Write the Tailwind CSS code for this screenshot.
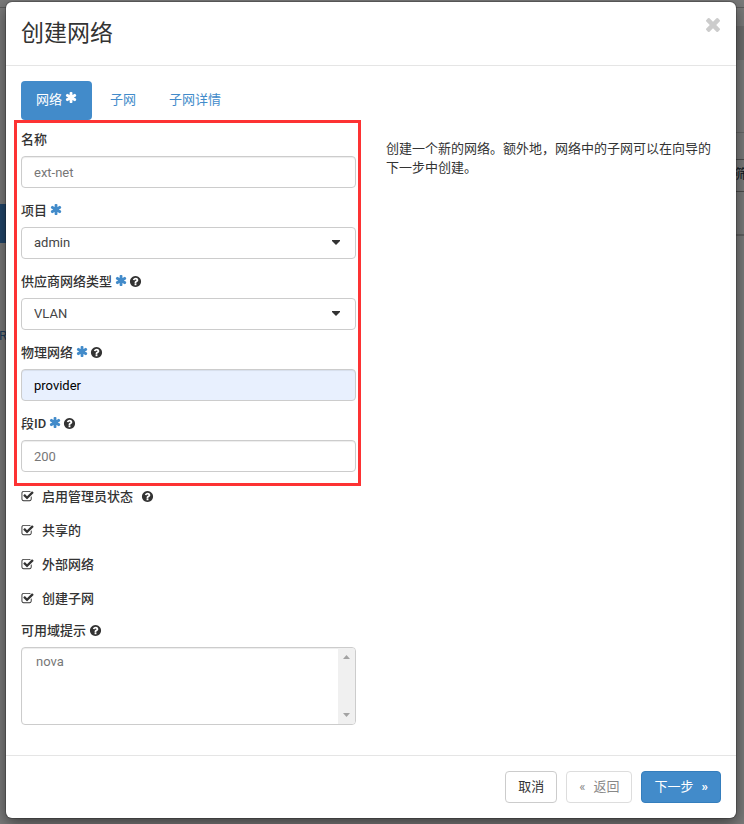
<!DOCTYPE html>
<html lang="zh-CN">
<head>
<meta charset="utf-8">
<meta name="viewport" content="width=device-width, initial-scale=1">
<title>创建网络</title>
<script src="https://cdn.jsdelivr.net/npm/@tailwindcss/browser@4"></script>
</head>
<body class="relative min-h-screen overflow-x-hidden bg-[#7a7a7a] font-[Roboto,'Noto_Sans_CJK_SC',sans-serif] text-[13px] leading-[19px] text-[#333]">

<svg class="hidden" aria-hidden="true">
  <symbol id="asterisk" viewBox="0 0 1792 1792"><path d="M1482 1050q46 26 59.5 77.5t-12.500 97.500l-64 110q-26 46-77.500 59.500t-97.500-12.500l-266-153v307q0 52-38 90t-90 38h-128q-52 0-90-38t-38-90v-307l-266 153q-46 26-97.500 12.500t-77.500-59.500l-64-110q-26-46-12.500-97.500t59.500-77.500l266-154-266-154q-46-26-59.500-77.500t12.500-97.500l64-110q26-46 77.500-59.500t97.500 12.500l266 153v-307q0-52 38-90t90-38h128q52 0 90 38t38 90v307l266-153q46-26 97.500-12.500t77.500 59.500l64 110q26 46 12.500 97.500t-59.500 77.500l-266 154z"/></symbol>
  <symbol id="help" viewBox="0 0 1792 1792"><path d="M1024 1376v-192q0-14-9-23t-23-9h-192q-14 0-23 9t-9 23v192q0 14 9 23t23 9h192q14 0 23-9t9-23zm256-672q0-88-55.500-163t-138.500-116-170-41q-243 0-371 213-15 24 8 42l132 100q7 6 19 6 16 0 25-12 53-68 86-92 34-24 86-24 48 0 85.500 26t37.500 59q0 38-20 61t-68 45q-63 28-115.500 86.500t-52.500 125.500v36q0 14 9 23t23 9h192q14 0 23-9t9-23q0-19 21.500-49.500t54.500-49.500q32-18 49-28.500t46-35 44.500-48 28-60.500 12.500-81zm384 192q0 209-103 385.500t-279.500 279.500-385.500 103-385.500-103-279.500-279.500-103-385.500 103-385.500 279.500-279.500 385.500-103 385.500 103 279.500 279.500 103 385.500z"/></symbol>
  <symbol id="check" viewBox="0 0 1792 1792"><path d="M1472 930v318q0 119-84.500 203.500t-203.500 84.500h-832q-119 0-203.500-84.500t-84.500-203.500v-832q0-119 84.500-203.500t203.500-84.500h832q63 0 117 25 15 7 18 23 3 17-9 29l-49 49q-10 10-23 10-3 0-9-2-23-6-45-6h-832q-66 0-113 47t-47 113v832q0 66 47 113t113 47h832q66 0 113-47t47-113v-254q0-13 9-22l64-64q10-10 23-10 6 0 12 3 20 8 20 29zm231-489l-814 814q-24 24-57 24t-57-24l-430-430q-24-24-24-57t24-57l110-110q24-24 57-24t57 24l263 263 647-647q24-24 57-24t57 24l110 110q24 24 24 57t-24 57z"/></symbol>
</svg>

<!-- Dimmed page behind the dialog -->
<div class="absolute inset-0 overflow-hidden" aria-hidden="true">
  <div class="absolute inset-x-0 top-[7px] h-px bg-[#5c5c5c]"></div>
  <div class="absolute right-0 top-[26px] h-[34px] w-3 bg-[#6d6d6d]"></div>
  <div class="absolute right-0 top-[132px] h-px w-3 bg-[#666]"></div>
  <div class="absolute right-0 top-[159px] h-[33px] w-3 border-y border-[#4c4c4c]"></div>
  <div class="absolute right-0 top-[234px] h-0.5 w-3 bg-[#606060]"></div>
  <span class="absolute left-[735px] top-[164px] text-[#0b1420]">筛</span>
  <div class="absolute left-0 top-[204px] h-[39px] w-3 bg-[#21466a]"></div>
  <span class="absolute -left-px top-[326px] text-[#1d3d5c]">R</span>
</div>

<div role="dialog" aria-modal="true" aria-labelledby="dialog-title" class="relative ml-1.5 mr-2 mt-0.5 rounded-md bg-white shadow-[0_0_0_1px_rgba(0,0,0,0.2),0_5px_15px_rgba(0,0,0,0.5)]">
  <header class="flex items-start justify-between border-b border-[#e5e5e5] px-[15px] py-4">
    <h1 id="dialog-title" class="text-[23px] leading-[31px]">创建网络</h1>
    <button type="button" aria-label="关闭" class="mr-px text-[#ccc]">
      <svg class="size-3.5 fill-current" viewBox="302 366 1188 1188"><path d="M1490 1322q0 40-28 68l-136 136q-28 28-68 28t-68-28l-294-294-294 294q-28 28-68 28t-68-28l-136-136q-28-28-28-68t28-68l294-294-294-294q-28-28-28-68t28-68l136-136q28-28 68-28t68 28l294 294 294-294q28-28 68-28t68 28l136 136q28 28 28 68t-28 68l-294 294 294 294q28 28 28 68z"/></svg>
    </button>
  </header>

  <form>
    <div class="px-[15px] pb-[30px] pt-[15px]">
      <nav class="mb-[11px] flex gap-[3px] text-[#428bca]">
        <a href="#network" aria-current="step" class="flex h-[39px] items-center gap-[3px] rounded bg-[#428bca] pb-[3px] pl-[15px] pr-3.5 text-white">网络<svg class="mb-[3px] size-[13px] fill-current"><use href="#asterisk"/></svg></a>
        <a href="#subnet" class="flex h-[39px] items-center px-[15px] pb-[3px]">子网</a>
        <a href="#details" class="flex h-[39px] items-center px-[15px] pb-[3px]">子网详情</a>
      </nav>

      <div class="grid grid-cols-2 gap-[30px]">
        <div>
          <div class="relative flex flex-col gap-3.5">
            <div class="flex flex-col gap-[7px]">
              <label for="name" class="flex h-[18px] items-center pb-px font-medium">名称</label>
              <input id="name" type="text" value="ext-net" class="h-8 w-full rounded border border-[#ccc] px-3 text-[#777] shadow-[inset_0_1px_1px_rgba(0,0,0,0.075)]">
            </div>
            <div class="flex flex-col gap-[7px]">
              <label for="project" class="flex h-[18px] items-center gap-[3px] pb-px font-medium">项目<svg class="mb-[3px] size-[13px] fill-[#428bca]"><use href="#asterisk"/></svg></label>
              <div class="relative">
                <select id="project" class="block h-8 w-full appearance-none rounded border border-[#ccc] bg-white px-3 pb-0.5 text-[#444]"><option>admin</option></select>
                <svg class="pointer-events-none absolute right-4 top-[13px] h-[5px] w-2 fill-[#333]" viewBox="0 0 8 5"><path d="M0 0h8v1L4 5 0 1z"/></svg>
              </div>
            </div>
            <div class="flex flex-col gap-[7px]">
              <label for="type" class="flex h-[18px] items-center gap-[3px] pb-px font-medium">供应商网络类型<svg class="mb-[3px] size-[13px] fill-[#428bca]"><use href="#asterisk"/></svg><svg class="-ml-0.5 size-[13px] fill-current"><use href="#help"/></svg></label>
              <div class="relative">
                <select id="type" class="block h-8 w-full appearance-none rounded border border-[#ccc] bg-white px-3 pb-0.5 text-[#444]"><option>VLAN</option></select>
                <svg class="pointer-events-none absolute right-4 top-[13px] h-[5px] w-2 fill-[#333]" viewBox="0 0 8 5"><path d="M0 0h8v1L4 5 0 1z"/></svg>
              </div>
            </div>
            <div class="flex flex-col gap-[7px]">
              <label for="physical" class="flex h-[18px] items-center gap-[3px] pb-px font-medium">物理网络<svg class="mb-[3px] size-[13px] fill-[#428bca]"><use href="#asterisk"/></svg><svg class="-ml-0.5 size-[13px] fill-current"><use href="#help"/></svg></label>
              <input id="physical" type="text" value="provider" class="h-8 w-full rounded border border-[#ccc] bg-[#e8f0fe] px-3 text-black shadow-[inset_0_1px_1px_rgba(0,0,0,0.075)]">
            </div>
            <div class="flex flex-col gap-[7px]">
              <label for="segment" class="flex h-[18px] items-center gap-[3px] pb-px font-medium">段ID<svg class="mb-[3px] size-[13px] fill-[#428bca]"><use href="#asterisk"/></svg><svg class="-ml-0.5 size-[13px] fill-current"><use href="#help"/></svg></label>
              <input id="segment" type="text" value="200" class="h-8 w-full rounded border border-[#ccc] px-3 text-[#777] shadow-[inset_0_1px_1px_rgba(0,0,0,0.075)]">
            </div>
            <!-- Highlight frame around the required fields -->
            <div class="pointer-events-none absolute -bottom-3.5 -left-[7px] -right-[5px] -top-[11px] border-3 border-[#fd3233]"></div>
          </div>

          <div class="mt-[15px] flex flex-col gap-4">
            <label class="flex h-[18px] items-center gap-2 font-medium"><span class="grid size-[13px]"><input type="checkbox" checked class="peer col-start-1 row-start-1 size-[13px] appearance-none"><svg class="pointer-events-none col-start-1 row-start-1 size-[13px] fill-current"><use href="#check"/></svg></span>启用管理员状态<svg class="size-[13px] fill-current"><use href="#help"/></svg></label>
            <label class="flex h-[18px] items-center gap-2 font-medium"><span class="grid size-[13px]"><input type="checkbox" checked class="peer col-start-1 row-start-1 size-[13px] appearance-none"><svg class="pointer-events-none col-start-1 row-start-1 size-[13px] fill-current"><use href="#check"/></svg></span>共享的</label>
            <label class="flex h-[18px] items-center gap-2 font-medium"><span class="grid size-[13px]"><input type="checkbox" checked class="peer col-start-1 row-start-1 size-[13px] appearance-none"><svg class="pointer-events-none col-start-1 row-start-1 size-[13px] fill-current"><use href="#check"/></svg></span>外部网络</label>
            <label class="flex h-[18px] items-center gap-2 font-medium"><span class="grid size-[13px]"><input type="checkbox" checked class="peer col-start-1 row-start-1 size-[13px] appearance-none"><svg class="pointer-events-none col-start-1 row-start-1 size-[13px] fill-current"><use href="#check"/></svg></span>创建子网</label>
          </div>

          <div class="mt-[15px] flex flex-col gap-[7px]">
            <label for="zones" class="flex h-[18px] items-center gap-[3px] pb-px font-medium">可用域提示<svg class="size-[13px] fill-current"><use href="#help"/></svg></label>
            <div class="flex h-[78px] overflow-hidden rounded border border-[#ccc] shadow-[inset_0_1px_1px_rgba(0,0,0,0.075)]">
              <select id="zones" multiple class="h-full min-w-0 flex-1 appearance-none overflow-hidden px-3.5 py-1.5 text-[#777]"><option>nova</option></select>
              <div class="flex w-[17px] flex-col items-center justify-between bg-[#f0f0f0] py-[7px]" aria-hidden="true">
                <svg class="h-1 w-[7px] fill-[#a3a3a3]" viewBox="0 0 7 4"><path d="M0 4h7L3.500 0z"/></svg>
                <svg class="h-1 w-[7px] fill-[#a3a3a3]" viewBox="0 0 7 4"><path d="M0 0h7L3.500 4z"/></svg>
              </div>
            </div>
          </div>
        </div>

        <p class="pt-2">创建一个新的网络。额外地，网络中的子网可以在向导的下一步中创建。</p>
      </div>
    </div>

    <footer class="flex justify-end gap-[9px] border-t border-[#e5e5e5] p-[15px]">
      <button type="button" class="flex h-8 items-center rounded border border-[#ccc] bg-white px-3 pb-0.5">取消</button>
      <button type="button" disabled class="flex h-8 items-center gap-2 rounded border border-[#ddd] bg-white px-3 pb-0.5 text-[#888]"><span>«</span>返回</button>
      <button type="button" class="flex h-8 items-center gap-2 rounded border border-[#357ebd] bg-[#428bca] px-3 pb-0.5 text-white">下一步<span class="font-bold">»</span></button>
    </footer>
  </form>
</div>
</body>
</html>
